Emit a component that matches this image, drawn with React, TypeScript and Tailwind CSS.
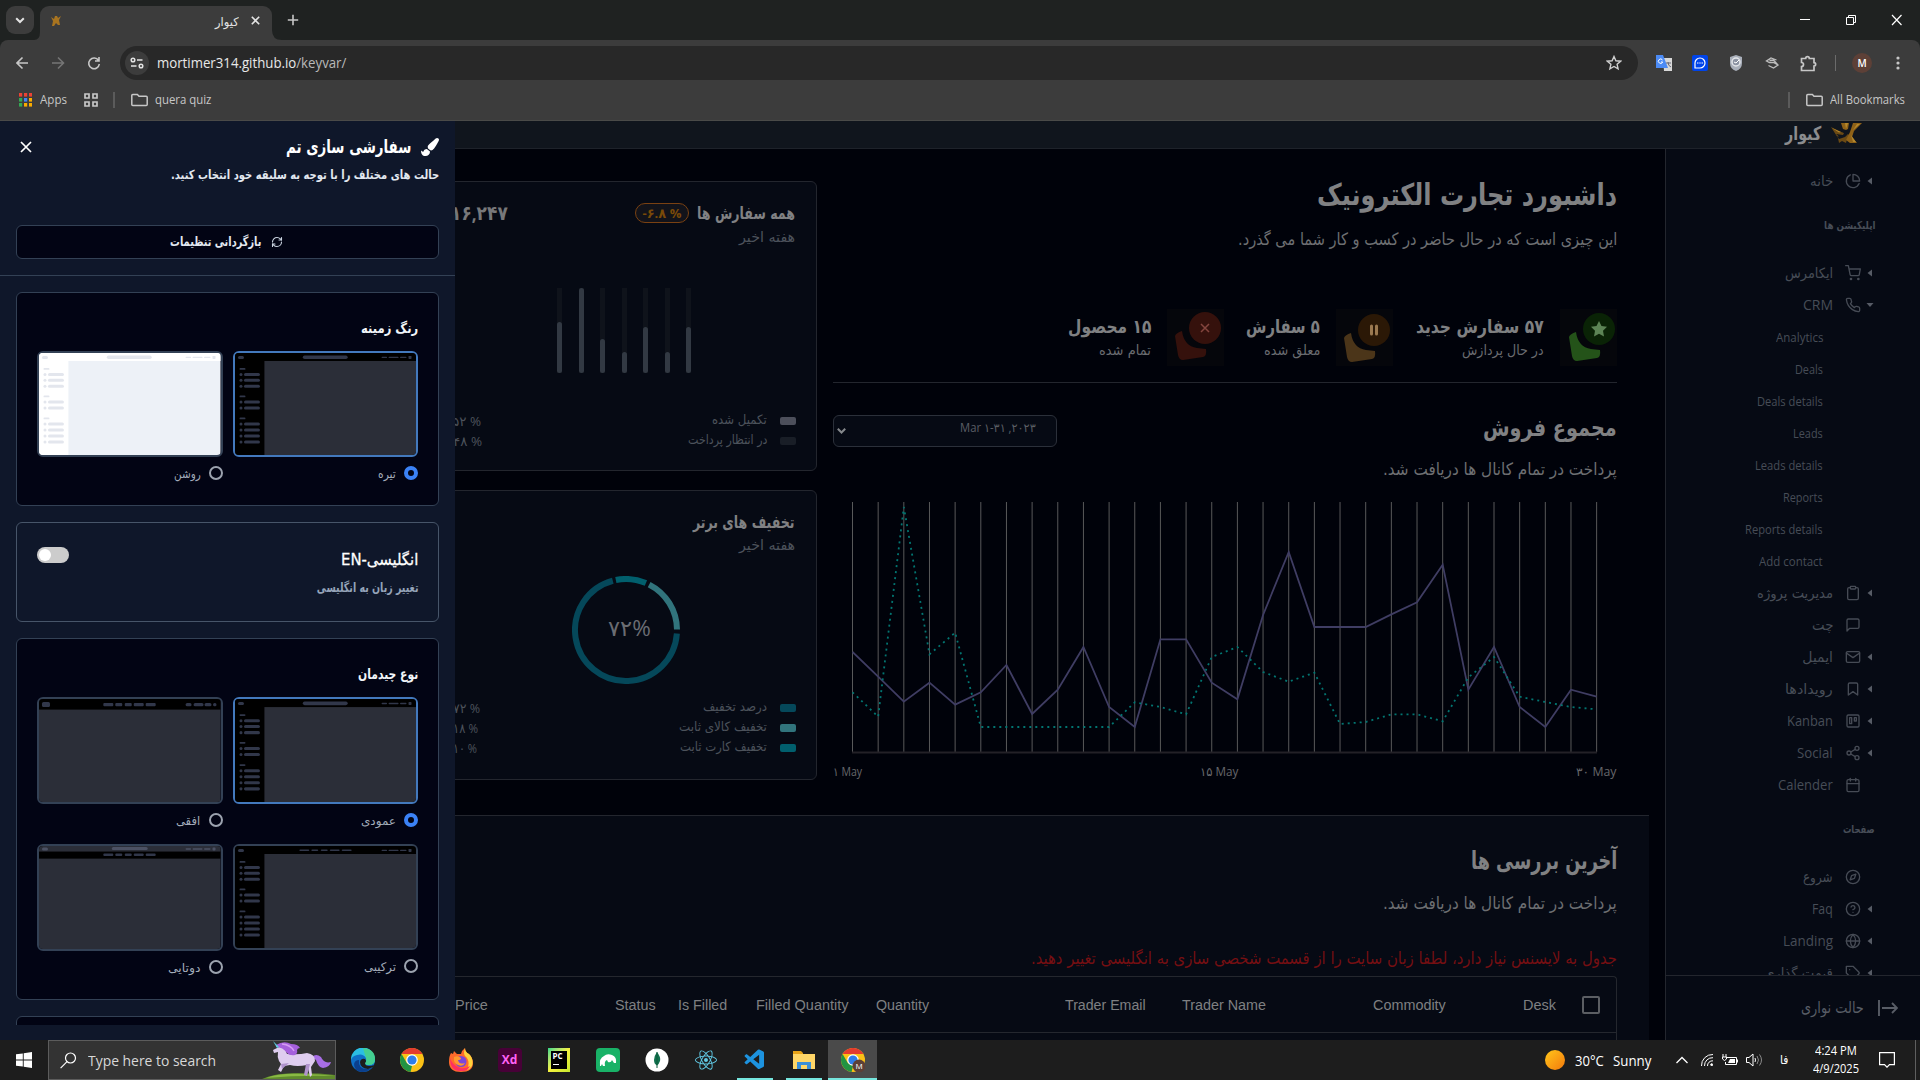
import React, { useLayoutEffect, useRef, useState } from "react";
import {
  FiPieChart, FiShoppingCart, FiPhone, FiClipboard, FiMessageSquare, FiMail, FiBookmark,
  FiTrello, FiShare2, FiCalendar, FiCompass, FiHelpCircle, FiGlobe, FiTag,
} from "react-icons/fi";
import { FaPaintBrush, FaReact } from "react-icons/fa";
import { VscVscode } from "react-icons/vsc";
import { RefreshCw } from "lucide-react";

const FA = "font-['DejaVu_Sans',sans-serif]";
const UI = "font-['Open_Sans','DejaVu_Sans',sans-serif]";

/** Single-line label condensed or stretched to an exact width. */
function T({ w, c = "", rtl = false, children }: { w: number; c?: string; rtl?: boolean; children: React.ReactNode }) {
  const ref = useRef<HTMLSpanElement>(null);
  const [k, setK] = useState(1);
  useLayoutEffect(() => {
    if (ref.current && ref.current.offsetWidth) setK(w / ref.current.offsetWidth);
  }, [w]);
  return (
    <span dir={rtl ? "rtl" : "ltr"} className={`block shrink-0 whitespace-nowrap ${rtl ? FA : UI} ${c}`} style={{ width: w }}>
      <span ref={ref} className={rtl ? "inline-block origin-right" : "inline-block origin-left"} style={{ transform: `scaleX(${k})` }}>
        {children}
      </span>
    </span>
  );
}

/* ---------------------------------------------------------------- browser */

function Folder() {
  return (
    <svg width="18" height="14" viewBox="0 0 18 14" fill="none" stroke="#c7c7c7" strokeWidth="1.5">
      <path d="M1.8 1.5h4.6l1.6 1.8h7.2a1 1 0 0 1 1 1v7.2a1 1 0 0 1-1 1H1.8a1 1 0 0 1-1-1v-9a1 1 0 0 1 1-1z" />
    </svg>
  );
}

function Logo({ className = "" }: { className?: string }) {
  return (
    <svg className={className} viewBox="0 0 31 20">
      <path fill="#6b4a14" d="M0 4l9 4.500 4 1.500-1 2-7-1 3 2.500-2-.3 2 2.800 6-2 3-3 2 2-3 3-1 4-4-2-3 2-1-5z" />
      <path fill="#8f6218" d="M10 0h8l-1 6-2 1-3-1zM22 0h9l-8 8-2 6 5 6h-7l-4-3 4-8z" />
      <path fill="#b5882c" d="M14 0h3l-2 6zM26 1h3l-7 6zM1 5l9 4-2 .5zM20 12l5 7h-3z" />
      <path fill="#10151d" d="M12 9l5-1-2 3z" />
    </svg>
  );
}

function Browser() {
  return (
    <div className="h-[121px] bg-[#1f2221]">
      <div className="flex h-10 items-start pl-1.5">
        <div className="mt-1.5 flex h-7 w-7 items-center justify-center rounded-[9px] bg-[#3c3c3c]">
          <svg width="10" height="7" fill="none" stroke="#e3e3e3" strokeWidth="2"><path d="M1.2 1.2L5 5l3.8-3.8" /></svg>
        </div>
        <svg width="6" height="40" className="shrink-0"><path d="M0 40q6 0 6-8v8z" fill="#3c3c3c" /></svg>
        <div className="mt-1.5 flex h-[34px] w-[232px] items-center rounded-t-[9px] bg-[#3c3c3c] pl-[11px]">
          <svg className="mb-1.5" width="10" height="11"><path fill="#a87420" d="M0 2l3 2 1-3h2l1 2 3-2-2 4 1 5H7L5 8l-2 3H1l1-5z" /></svg>
          <div className="ml-[154px]"><T w={24} rtl c="text-[12px] leading-[20px] text-[#e3e3e3] mb-0.5">کیوار</T></div>
          <svg className="mb-1.5 ml-3" width="9" height="9" stroke="#e3e3e3" strokeWidth="1.6"><path d="M.8.8l7.4 7.4M8.2.8L.8 8.2" /></svg>
        </div>
        <svg width="10" height="40" className="shrink-0"><path d="M10 40q-10 0-10-10v10z" fill="#3c3c3c" /></svg>
        <svg className="ml-[5px] mt-3.5" width="12" height="12" stroke="#c7c7c7" strokeWidth="1.6"><path d="M6 .8v10.4M.8 6h10.4" /></svg>
        <div className="ml-auto mt-[14px] flex pr-[18px]">
          <svg width="102" height="12" fill="none" stroke="#fff" strokeWidth="1">
            <path d="M0 5.5h10" />
            <path d="M46.5 3.5h7v7h-7zM48.5 3.5v-2h7v7h-2" />
            <path d="M92 1l9.5 10M101.500 1l-9.5 10" strokeWidth="1.2" />
          </svg>
        </div>
      </div>
      <div className="h-[81px] rounded-t-lg border-b border-[#4a4a48] bg-[#3c3c3c]">
        <div className="flex h-[46px] items-center">
          <svg className="ml-4 shrink-0" width="86" height="16" fill="none" strokeWidth="1.6">
            <path stroke="#c7c7c7" d="M12 8H1.5M6.5 2.5L1 8l5.500 5.500" />
            <path stroke="#757575" d="M36 8h10.500M42 2.500L47.500 8 42 13.500" />
            <path stroke="#c7c7c7" d="M82.500 5.500A5.300 5.300 0 1 0 83.300 9M83 2v4h-4" />
          </svg>
          <div className="ml-[18px] flex h-[34px] w-[1518px] items-center rounded-full bg-[#282828] pl-[5px] pr-4">
            <div className="flex h-6 w-6 items-center justify-center rounded-full bg-[#3c3c3c]">
              <svg width="14" height="12" fill="none" stroke="#e3e3e3" strokeWidth="1.500"><circle cx="3" cy="3" r="1.800" /><path d="M7 3h5.500M1 9h5.500" /><circle cx="11" cy="9" r="1.800" /></svg>
            </div>
            <T w={189} c="ml-2 text-[14px] leading-[20px] text-[#e8e8e8]">mortimer314.github.io<span className="text-[#b9b9b9]">/keyvar/</span></T>
            <svg className="ml-auto" width="16" height="16" viewBox="0 0 16 16" fill="none" stroke="#d0d0d0" strokeWidth="1.400"><path d="M8 1.500l1.900 4.300 4.700.4-3.500 3.100 1 4.600L8 11.500l-4.100 2.400 1-4.600L1.400 6.200l4.700-.4z" /></svg>
          </div>
          <div className="flex flex-1 items-center">
            <svg className="ml-[18px]" width="16" height="16"><path fill="#d8d8d8" d="M7 3h9v13H8z" /><path fill="#4c8bf5" d="M0 0h7l5 13H0z" /><path d="M6.500 5A2.200 2.200 0 1 0 6.700 7H5" fill="none" stroke="#fff" /><path d="M10 8h5M12 7q0 4 3 5" stroke="#667" fill="none" /></svg>
            <svg className="ml-5" width="16" height="16"><rect width="16" height="16" rx="2" fill="#0044ea" /><path d="M3 13V8a5 5 0 1 1 5 5z" fill="none" stroke="#fff" strokeWidth="1.200" /><path d="M5 8h1.500M7.300 8h1.400M9.500 8H11" stroke="#fff" /></svg>
            <svg className="ml-5" width="16" height="16"><path d="M8 0l6 2v6q0 6-6 8-6-2-6-8V2z" fill="#a9afba" /><circle cx="8" cy="7" r="4" fill="#8c93a3" stroke="#e4e6ea" strokeWidth="1.500" /><path d="M6 7l2 1 3-3" stroke="#fff" fill="none" /></svg>
            <svg className="ml-5" width="16" height="16" fill="none" stroke="#bdbdbd" strokeWidth="1.300"><path d="M12.500 5L7 3 2.500 6l3 1.500h4l4.500 2.500-4.500 3-5-2.500M5.500 5.500l4-.5 4 4.500" /></svg>
            <svg className="ml-5" width="17" height="17" fill="none" stroke="#c7c7c7" strokeWidth="1.700"><path d="M1.500 3.500h4.200a1.800 1.800 0 0 1 3.600 0H14v4.200a1.600 1.600 0 0 1 0 3.300v4.500H1.500V11.500a2 2 0 0 0 0-4z" /></svg>
            <div className="ml-[18px] h-4 w-px bg-[#6b6b6b]" />
            <div className="ml-4 flex h-5 w-5 items-center justify-center rounded-full bg-[#5d4037] font-['Open_Sans',sans-serif] text-[10px] font-semibold text-white">M</div>
            <svg className="ml-6" width="4" height="14" fill="#c7c7c7"><circle cx="2" cy="2" r="1.600" /><circle cx="2" cy="7" r="1.600" /><circle cx="2" cy="12" r="1.600" /></svg>
          </div>
        </div>
        <div className="flex h-7 items-center pl-[19px]">
          <svg width="13" height="14">
            {["#ea4335", "#ea4335", "#ea4335", "#34a853", "#4285f4", "#f9ab00", "#34a853", "#f9ab00", "#f9ab00"].map((f, i) => (
              <rect key={i} x={(i % 3) * 5} y={Math.floor(i / 3) * 5} width="3.200" height="3.600" fill={f} />
            ))}
          </svg>
          <T w={27} c="ml-2 text-[12px] text-[#c7c7c7]">Apps</T>
          <svg className="ml-[17px]" width="14" height="14" fill="none" stroke="#c7c7c7" strokeWidth="1.700"><path d="M1 1h4v4H1zM9 1h4v4H9zM1 9h4v4H1zM9 9h4v4H9z" /></svg>
          <div className="ml-[15px] mr-4 h-4 w-0.5 bg-[#5b5b5b]" />
          <Folder />
          <T w={56} c="ml-1.5 text-[12px] text-[#c7c7c7]">quera quiz</T>
          <div className="ml-auto mr-4 h-4 w-0.5 bg-[#5b5b5b]" />
          <Folder />
          <T w={75} c="ml-1.5 mr-[15px] text-[12px] text-[#c7c7c7]">All Bookmarks</T>
        </div>
      </div>
    </div>
  );
}

/* ----------------------------------------------------------- theme drawer */

type Kind = "light" | "dark" | "horizontal" | "combo" | "dual";

function Thumb({ kind }: { kind: Kind }) {
  const light = kind === "light";
  const bar = light ? "#fff" : "#000";
  const body = light ? "#edf1f7" : "#2b2e38";
  const pill = light ? "#e3e6ed" : "#31374a";
  const side = kind === "light" || kind === "dark" || kind === "combo";
  const topH = side ? 8 : kind === "horizontal" ? 10.5 : 12.5;
  const pills: [number, number][] = [[64.5, 10], [76.5, 7], [86, 7], [95, 10], [107, 10]];
  return (
    <svg className="block h-full w-full" viewBox="0 0 182 102" preserveAspectRatio="none">
      <rect width="182" height="102" fill={body} />
      <rect width="182" height={topH} fill={bar} />
      {kind === "dual" && <rect width="182" height="5.500" fill="#2b2e38" />}
      {side && <rect width="29.500" height="102" fill={bar} />}
      <g fill={kind === "dual" ? "#4c5163" : pill}>
        <rect x="3" y={kind === "dual" ? 1.5 : 3} width={kind === "horizontal" ? 8 : 6} height={kind === "horizontal" ? 5 : 3} rx="1.500" />
        {kind === "horizontal"
          ? [[147, 6], [155, 10], [166, 7], [174.5, 3.5]].map(([x, w]) => <rect key={x} x={x} y="4" width={w} height="3.200" rx="1.600" />)
          : [[147, 5.5], [154, 10], [165.5, 6.5], [174, 3]].map(([x, w]) => (
              <rect key={x} x={x} y={(kind === "dual" ? 2.2 : 3.7) - (w === 3 ? 0.8 : 0)} width={w} height={w === 3 ? 3 : 1.4} rx=".7" />
            ))}
        {(kind === "light" || kind === "dark") && <rect x="68" y="2.500" width="45" height="3.600" rx="1.800" />}
        {kind === "dual" && <rect x="73" y="1" width="36" height="3" rx="1.500" />}
      </g>
      <g fill={pill}>
        {!light && kind !== "dark" && pills.map(([x, w]) => (
          <rect key={x} x={x} y={kind === "horizontal" ? 4 : kind === "dual" ? 7.5 : 3.4} width={w} height={kind === "horizontal" ? 3.2 : kind === "dual" ? 2.5 : 1.6} rx="1" />
        ))}
        {side && [15.5, 43, 65].map((y) => <rect key={y} x="4.500" y={y - 0.5} width="6" height="1.800" rx=".9" />)}
        {side && [21.5, 27.3, 33.3, 49, 55, 71, 77, 83, 89].map((y) => (
          <g key={y}><rect x="4.500" y={y - 1.5} width="3" height="3" rx="1.500" /><rect x="9" y={y - 1.5} width="16" height="3" rx="1.500" /></g>
        ))}
      </g>
    </svg>
  );
}

function Option({ kind, label, w, on = false, h = "h-[106px]" }: { kind: Kind; label: string; w: number; on?: boolean; h?: string }) {
  return (
    <div className="w-[186px]">
      <div className={`overflow-hidden rounded-md border-2 ${h} ${on ? "border-[#4379bd]" : "border-[#334155]"}`}><Thumb kind={kind} /></div>
      <div className="mt-[9px] flex h-3.5 items-center justify-end gap-2">
        <T w={w} rtl c="mt-0.5 text-[12px] font-medium leading-[14px] text-[#a3acba]">{label}</T>
        {on ? <span className="h-3.5 w-3.5 rounded-full border-[4px] border-[#3b82f6]" /> : <span className="h-3.5 w-3.5 rounded-full border-2 border-[#9ca3af]" />}
      </div>
    </div>
  );
}

function Drawer() {
  return (
    <aside className="flex h-full w-[455px] shrink-0 flex-col overflow-hidden bg-[#0f172a]">
      <div className="h-[155px] border-b border-[#334155] px-4 pt-[14px]">
        <div className="flex h-6 items-center pl-1">
          <svg className="mr-auto" width="12" height="12" stroke="#fff" strokeWidth="1.700"><path d="M1 1l10 10M11 1L1 11" /></svg>
          <T w={125} rtl c="text-[18px] font-bold leading-[24px] text-white">سفارشی سازی تم</T>
          <FaPaintBrush className="ml-2.5 h-[18px] w-[18px] text-white" />
        </div>
        <div className="mt-[5px] flex h-6 justify-end"><T w={268} rtl c="text-[12.5px] font-bold leading-[22px] text-[#e2e8f0]">حالت های مختلف را با توجه به سلیقه خود انتخاب کنید.</T></div>
        <div className="mt-[37px] flex h-[34px] items-center justify-center gap-[9px] rounded-md border border-[#334155] bg-[#020414] pr-0.5">
          <T w={91} rtl c="text-[13px] font-bold leading-[32px] text-[#e2e8f0]">بازگردانی تنظیمات</T>
          <RefreshCw className="h-3 w-3 text-[#cbd5e1]" strokeWidth={2.2} />
        </div>
      </div>
      <div className="mx-4 h-[749px] overflow-hidden pt-4">
        <section className="h-[214px] rounded-md border border-[#334155] bg-[#020414] px-5 pt-[25px]">
          <div className="flex justify-end"><T w={57} rtl c="text-[14px] font-bold leading-[20px] text-[#f1f5f9]">رنگ زمینه</T></div>
          <div className="mt-[13px] flex justify-between gap-2.5">
            <Option kind="light" label="روشن" w={27} />
            <Option kind="dark" label="تیره" w={18} on />
          </div>
        </section>
        <section className="mt-4 flex h-[100px] justify-between rounded-md border border-[#475569] px-5 pt-6">
          <span className="flex h-4 w-8 items-center rounded-full bg-[#ccc] pl-0.5"><span className="h-3 w-3 rounded-full bg-white" /></span>
          <div className="flex flex-col items-end">
            <T w={77} rtl c="mt-px text-[16px] leading-[24px] text-white [-webkit-text-stroke:0.3px_white]">انگلیسی-EN</T>
            <T w={102} rtl c="mt-1.5 text-[13px] font-bold leading-[20px] text-[#94a3b8]">تغییر زبان به انگلیسی</T>
          </div>
        </section>
        <section className="mt-4 h-[362px] rounded-md border border-[#334155] bg-[#020414] px-5 pt-[25px]">
          <div className="flex justify-end"><T w={60} rtl c="text-[14px] font-bold leading-[20px] text-[#f1f5f9]">نوع چیدمان</T></div>
          <div className="mt-[13px] flex justify-between gap-2.5">
            <Option kind="horizontal" label="افقی" w={24} h="h-[107px]" />
            <Option kind="dark" label="عمودی" w={35} on h="h-[107px]" />
          </div>
          <div className="mt-[17px] flex justify-between gap-2.5">
            <Option kind="dual" label="دوتایی" w={32} h="h-[107px]" />
            <Option kind="combo" label="ترکیبی" w={32} />
          </div>
        </section>
        <section className="mt-4 h-12 rounded-md border border-[#334155] bg-[#020414]" />
      </div>
    </aside>
  );
}

/* -------------------------------------------------------------- dashboard */

function Legend({ color, label, w, value, vr, vw }: { color: string; label: string; w: number; value: string; vr: string; vw: number }) {
  return (
    <div className="flex h-5 items-center pr-5">
      <div className={`${vr} flex shrink-0 justify-end`}><T w={vw} rtl={false} c="text-[13px] leading-[18px] text-[#4c525b]">{value}</T></div>
      <div className="ml-auto"><T w={w} rtl c="-mt-0.5 text-[13px] leading-[18px] text-[#4c525b]">{label}</T></div>
      <span className={`ml-[13px] h-2 w-4 rounded-[2px] ${color}`} />
    </div>
  );
}

function OrdersCard() {
  const heights = [51, 85, 34, 21.5, 46.5, 21.5, 46.5];
  return (
    <div className="h-[290px] rounded-md border border-[#23262e] bg-[#060a14]">
      <div className="mt-4 flex h-[30px] items-center pr-[21px]">
        <div className="flex w-[72px] justify-end"><T w={57} c="text-[20px] font-bold leading-[30px] text-[#77787a]">۱۶,۲۴۷</T></div>
        <div className="ml-auto flex h-5 w-[54px] items-center justify-center rounded-full border border-[#7a4112] bg-[#12131a]">
          <T w={39} c="text-[13px] font-bold leading-[18px] text-[#7a4a08]">-۶.۸ %</T>
        </div>
        <div className="ml-2"><T w={98} rtl c="text-[17px] font-bold leading-[26px] text-[#808183]">همه سفارش ها</T></div>
      </div>
      <div className="-mt-px flex justify-end pr-[21px]"><T w={56} rtl c="text-[14px] leading-[20px] text-[#4c525b]">هفته اخیر</T></div>
      <div className="ml-[121px] mt-[41px] flex h-[85px] w-[134px] items-stretch justify-between">
        {heights.map((h, i) => (
          <div key={i} className="flex w-[5px] flex-col justify-end bg-[#0f131b]"><div className="rounded-full bg-[#323943]" style={{ height: h }} /></div>
        ))}
      </div>
      <div className="mt-[38px]">
        <Legend color="bg-[#4c4f5b]" label="تکمیل شده" w={55} value="۵۲ %" vr="w-[45px]" vw={29} />
        <Legend color="bg-[#191e27]" label="در انتظار پرداخت" w={79} value="۴۸ %" vr="w-[46px]" vw={29} />
      </div>
    </div>
  );
}

function arc(a0: number, a1: number) {
  const p = (a: number) => `${54 + 51 * Math.cos((a * Math.PI) / 180)} ${54 + 51 * Math.sin((a * Math.PI) / 180)}`;
  return `M${p(a0)}A51 51 0 ${a1 - a0 > 180 ? 1 : 0} 1 ${p(a1)}`;
}

function DiscountCard() {
  return (
    <div className="mt-[19px] h-[290px] rounded-md border border-[#23262e] bg-[#060a14] pt-[18px]">
      <div className="flex justify-end pr-[21px]"><T w={102} rtl c="text-[17px] font-bold leading-[26px] text-[#808183]">تخفیف های برتر</T></div>
      <div className="flex justify-end pr-[21px]"><T w={56} rtl c="text-[14px] leading-[20px] text-[#4c525b]">هفته اخیر</T></div>
      <div className="ml-[136px] mt-[21px] grid h-[108px] w-[108px] place-items-center">
        <svg className="col-start-1 row-start-1" width="108" height="108" fill="none" strokeWidth="6">
          <path stroke="#05485a" d={arc(4, 255)} />
          <path stroke="#015f6d" d={arc(258.5, 293)} />
          <path stroke="#31747c" d={arc(297, 359.5)} />
        </svg>
        <div className="col-start-1 row-start-1 -mt-1.5 ml-1.5"><T w={43} c="text-[22px] leading-[30px] text-[#6a6c72]">۷۲%</T></div>
      </div>
      <div className="mt-[14px]">
        <Legend color="bg-[#05485a]" label="درصد تخفیف" w={64} value="۷۲ %" vr="w-[44px]" vw={27} />
        <Legend color="bg-[#31747c]" label="تخفیف کالای ثابت" w={88} value="۱۸ %" vr="w-[42px]" vw={25} />
        <Legend color="bg-[#015f6d]" label="تخفیف کارت ثابت" w={87} value="۱۰ %" vr="w-[41px]" vw={24} />
      </div>
    </div>
  );
}

function Stat({ kind, title, tw, sub, sw, m }: { kind: "g" | "o" | "r"; title: string; tw: number; sub: string; sw: number; m: string }) {
  const [disc, leaf, ink] = kind === "g" ? ["#0a2306", "#245319", "#5c8455"] : kind === "o" ? ["#2b1806", "#4b3519", "#9b7950"] : ["#35110c", "#35110c", "#84453e"];
  return (
    <div className={`flex items-center ${m}`}>
      <div className="-mt-0.5 mr-4 flex flex-col items-end">
        <T w={tw} rtl c="text-[19px] font-bold leading-[26px] text-[#7f8082]">{title}</T>
        <T w={sw} rtl c="text-[14px] leading-[22px] text-[#6a6c70]">{sub}</T>
      </div>
      <svg width="57" height="57" className="shrink-0">
        <rect width="57" height="57" fill="#05060b" />
        <g transform={kind === "g" ? "translate(0 1)" : kind === "o" ? "translate(-1 2)" : "translate(-1 0)"}>
          <path fill={leaf} d="M9 27q1-3 7-5 2 15 15 17l9 1q1 7-3 8l-20 3q-4 0-5-5z" />
          <circle cx="39" cy="19" r="16" fill={disc} />
          {kind === "g" && <path fill={ink} d="M39 11l2.500 5 5.500.8-4 4 1 5.700-5-2.700-5 2.700 1-5.700-4-4 5.500-.8z" />}
          {kind === "o" && <path stroke={ink} strokeWidth="3" strokeLinecap="round" d="M36.500 15v8M41.500 15v8" />}
          {kind === "r" && <path stroke={ink} strokeWidth="1.500" d="M35 15l8 8M43 15l-8 8" />}
        </g>
      </svg>
    </div>
  );
}

const SALES = [519, 593, 668, 611, 677, 640, 558, 705, 632, 504, 684, 744, 481, 481, 611, 661, 408, 219, 444, 444, 444, 406, 370, 257, 632, 504, 684, 744, 632, 653];
const PREV = [640, 713, 84, 526, 461, 744, 744, 744, 744, 744, 744, 670, 684, 706, 534, 504, 579, 608, 581, 735, 729, 706, 706, 727, 595, 534, 653, 669, 684, 691];
const gx = (i: number) => 0.5 + i * 25.66;
const toPoints = (d: number[]) => d.map((v, i) => `${gx(i)},${(v - 69) / 3}`).join(" ");

function Chart() {
  return (
    <svg className="ml-[19px] block" width="746" height="252" fill="none">
      {SALES.map((_, i) => <path key={i} d={`M${gx(i)} 0v250`} stroke="#58595a" strokeWidth="1" />)}
      <path d="M0 250.500h745" stroke="#232127" strokeWidth="2" />
      <polyline points={toPoints(SALES)} stroke="#3f3d63" strokeWidth="1.800" />
      <polyline points={toPoints(PREV)} stroke="#027571" strokeWidth="1.800" strokeDasharray="2 4" />
    </svg>
  );
}

function TableHead() {
  const cols: [string, number, string][] = [
    ["Price", 33, ""], ["Status", 41, "ml-[127px]"], ["Is Filled", 49, "ml-[22px]"], ["Filled Quantity", 92, "ml-[29px]"],
    ["Quantity", 53, "ml-[28px]"], ["Trader Email", 81, "ml-[136px]"], ["Trader Name", 84, "ml-[36px]"], ["Commodity", 73, "ml-[107px]"], ["Desk", 33, "ml-[77px]"],
  ];
  return (
    <div className="mr-8 mt-[4px] h-[64px] overflow-hidden rounded-tr border-r border-t border-[#24272e]">
      <div className="flex h-14 items-center border-b border-[#24272e]">
        {cols.map(([t, w, m]) => (
          <div key={t} className={m}><T w={w} c="text-[14px] text-[#7f8082] [&>span]:font-['Liberation_Sans',sans-serif]">{t}</T></div>
        ))}
        <span className="ml-[26px] h-[18px] w-[18px] rounded-[2px] border-2 border-[#5b5e63]" />
      </div>
    </div>
  );
}

function Dashboard() {
  return (
    <main className="flex h-full w-[1210px] shrink-0 flex-col overflow-hidden bg-[#00020a]">
      <div className="flex h-[666px] shrink-0">
        <div className="-ml-5 w-[382px] shrink-0 pt-8"><OrdersCard /><DiscountCard /></div>
        <div className="ml-4 w-[784px] shrink-0">
          <div className="flex h-[71px] items-end justify-end"><T w={300} rtl c="text-[30px] font-bold leading-[50px] text-[#808183]">داشبورد تجارت الکترونیک</T></div>
          <div className="mt-[5px] flex justify-end"><T w={379} rtl c="text-[17px] leading-[28px] text-[#6d6f72]">این چیزی است که در حال حاضر در کسب و کار شما می گذرد.</T></div>
          <div className="mt-[56px] flex h-[74px] items-start justify-end border-b border-[#23262e]">
            <Stat kind="r" title="۱۵ محصول" tw={83} sub="تمام شده" sw={52} m="mr-[22px]" />
            <Stat kind="o" title="۵ سفارش" tw={74} sub="معلق شده" sw={56} m="mr-[23px]" />
            <Stat kind="g" title="۵۷ سفارش جدید" tw={128} sub="در حال پردازش" sw={82} m="" />
          </div>
          <div className="mt-[26px] flex items-start justify-between">
            <div className="mt-[6px] flex h-8 w-[224px] items-center rounded-md border border-[#2b303a] bg-[#060a14] pl-[3px] pr-5">
              <svg width="9" height="6" fill="none" stroke="#85888c" strokeWidth="2"><path d="M.8.8l3.700 3.700L8.200.8" /></svg>
              <div className="mb-1.5 ml-auto"><T w={76} c="text-[12px] leading-[18px] text-[#5b5e64]">Mar ۱-۳۱ ,۲۰۲۳</T></div>
            </div>
            <T w={134} rtl c="text-[24px] font-bold leading-[38px] text-[#808183]">مجموع فروش</T>
          </div>
          <div className="mt-2 flex justify-end"><T w={234} rtl c="text-[17px] leading-[28px] text-[#6d6f72]">پرداخت در تمام کانال ها دریافت شد.</T></div>
          <div className="mt-[19px]"><Chart /></div>
          <div className="mt-[9px] flex">
            <T w={29} c="text-[12px] leading-[18px] text-[#66676a]">۱ May</T>
            <div className="ml-[338px]"><T w={38} c="text-[12px] leading-[18px] text-[#66676a]">۱۵ May</T></div>
            <div className="ml-auto mr-px"><T w={40} c="text-[12px] leading-[18px] text-[#66676a]">۳۰ May</T></div>
          </div>
        </div>
      </div>
      <div className="mr-4 flex-1 border-t border-[#23262e] bg-[#060a14]">
        <div className="mr-8 mt-[25px] flex justify-end"><T w={146} rtl c="text-[25px] font-bold leading-[40px] text-[#808183]">آخرین بررسی ها</T></div>
        <div className="mr-8 mt-2 flex justify-end"><T w={234} rtl c="text-[17px] leading-[28px] text-[#6d6f72]">پرداخت در تمام کانال ها دریافت شد.</T></div>
        <div className="mr-8 mt-[27px] flex justify-end"><T w={586} rtl c="text-[17px] leading-[28px] text-[#750f12]">جدول به لایسنس نیاز دارد، لطفا زبان سایت را از قسمت شخصی سازی به انگلیسی تغییر دهید.</T></div>
        <TableHead />
      </div>
    </main>
  );
}

/* ---------------------------------------------------------------- sidebar */

type NavIcon = React.ComponentType<{ className?: string; strokeWidth?: number }>;

function Nav({ Icon, label, w, rtl = false, mark = "left" }: { Icon: NavIcon; label: string; w: number; rtl?: boolean; mark?: "left" | "down" | "none" }) {
  return (
    <div className="flex h-8 shrink-0 items-center justify-end pr-[46px]">
      <T w={w} rtl={rtl} c="text-[14px] leading-[22px] text-[#474d57]">{label}</T>
      <Icon className="ml-3 h-4 w-4 text-[#464b55]" strokeWidth={2} />
      <svg className="ml-[5px]" width="8" height="8" fill="#565b65">
        {mark === "left" && <path d="M6 .5v7L1.500 4z" />}
        {mark === "down" && <path d="M.5 2h7L4 6z" />}
      </svg>
    </div>
  );
}

const SUB: [string, number][] = [["Analytics", 47], ["Deals", 28], ["Deals details", 66], ["Leads", 30], ["Leads details", 68], ["Reports", 40], ["Reports details", 78], ["Add contact", 64]];

function Sidebar() {
  return (
    <nav className="flex h-full w-[255px] shrink-0 flex-col border-l border-[#23262e] bg-[#060a14]">
      <div className="flex h-[826px] flex-col overflow-hidden pt-4">
        <Nav Icon={FiPieChart} label="خانه" w={23} rtl />
        <div className="mt-[18px] flex h-[22px] shrink-0 justify-end pr-[45px]"><T w={51} rtl c="text-[11px] font-bold leading-[22px] text-[#474d57]">اپلیکیشن ها</T></div>
        <div className="h-5 shrink-0" />
        <Nav Icon={FiShoppingCart} label="ایکامرس" w={48} rtl />
        <Nav Icon={FiPhone} label="CRM" w={30} mark="down" />
        {SUB.map(([l, w]) => (
          <div key={l} className="flex h-8 shrink-0 items-center justify-end pr-[97px] pt-0.5"><T w={w} c="text-[12px] text-[#474d57]">{l}</T></div>
        ))}
        <Nav Icon={FiClipboard} label="مدیریت پروژه" w={76} rtl />
        <Nav Icon={FiMessageSquare} label="چت" w={21} rtl mark="none" />
        <Nav Icon={FiMail} label="ایمیل" w={31} rtl />
        <Nav Icon={FiBookmark} label="رویدادها" w={48} rtl />
        <Nav Icon={FiTrello} label="Kanban" w={46} />
        <Nav Icon={FiShare2} label="Social" w={36} />
        <Nav Icon={FiCalendar} label="Calender" w={55} mark="none" />
        <div className="mt-[18px] flex h-[22px] shrink-0 justify-end pr-[45px]"><T w={32} rtl c="text-[11px] font-bold leading-[22px] text-[#474d57]">صفحات</T></div>
        <div className="h-[20px] shrink-0" />
        <Nav Icon={FiCompass} label="شروع" w={30} rtl mark="none" />
        <Nav Icon={FiHelpCircle} label="Faq" w={21} />
        <Nav Icon={FiGlobe} label="Landing" w={50} />
        <Nav Icon={FiTag} label="قیمت گذاری" w={69} rtl />
      </div>
      <div className="flex flex-1 items-center justify-end border-t border-[#23262e] pr-[22px]">
        <T w={63} rtl c="text-[16px] leading-[24px] font-medium text-[#585d66]">حالت نواری</T>
        <svg className="ml-3.5" width="20" height="16" fill="none" stroke="#585d66" strokeWidth="1.900"><path d="M1 0v16M4 8h15M14 3l5 5-5 5" /></svg>
      </div>
    </nav>
  );
}

/* ---------------------------------------------------------------- taskbar */

function ChromeMark({ badge = false }: { badge?: boolean }) {
  return (
    <svg width="24" height="24" viewBox="0 0 24 24">
      <circle cx="12" cy="12" r="12" fill="#fbc116" />
      <path d="M1.600 6A12 12 0 0 1 22.400 6H12z" fill="#e33b2e" />
      <path d="M1.600 6l5.200 9L12 18l-1.500 5.900A12 12 0 0 1 1.600 6z" fill="#229342" />
      <circle cx="12" cy="12" r="5.800" fill="#fff" />
      <circle cx="12" cy="12" r="4.600" fill="#2f7de9" />
      {badge && <circle cx="18" cy="18" r="6.500" fill="#5d4037" />}
      {badge && <text x="18" y="21" fontSize="8" textAnchor="middle" fill="#fff" fontFamily="Open Sans">M</text>}
    </svg>
  );
}

function Unicorn() {
  return (
    <svg className="ml-auto h-[38px] w-[73px] shrink-0" viewBox="0 0 73 38">
      <path d="M0 38q12-6 36-6 24 0 37 2v4z" fill="#5f8a2c" />
      <path d="M4 37q14-5 34-4 20 0 35 2-36-1-69 2z" fill="#8ab944" />
      <path d="M50 16q4-4 9 0 3 7 10 5-1 5-8 6-5-1-7-8z" fill="#a86ee6" />
      <path d="M17 6q6 0 8 7 12 1 20-1 8 1 8 8l-4 6 1 8-2 2-2-9-1-3q-10 2-17 0l-6 1-3 6-3-2 3-6-2-3q-2-4-1-9l-4 1-1-3z" fill="#dfcdef" />
      <path d="M44 23l-2 11 3 1 3-12zM27 22l-8 1 1 5" fill="#b092cc" />
      <path d="M14 4q8-5 15-1 7 0 9 4-3 0-3 3 1 2-2 4-5 1-8-2-4-6-11-6z" fill="#a560dc" />
      <path d="M20 3q9 1 12 7" stroke="#d59bf5" strokeWidth="1.500" fill="none" />
      <path d="M11 0l6 6-2 1z" fill="#5fd0df" />
    </svg>
  );
}

function App24({ children, active = "" }: { children: React.ReactNode; active?: string }) {
  return <div className={`flex h-full w-[49px] shrink-0 flex-col items-center pt-2 ${active}`}>{children}</div>;
}

function Taskbar() {
  return (
    <div className="flex h-10 bg-[#1d1d1d]">
      <div className="flex w-12 items-center justify-center">
        <svg width="16" height="16" fill="#fff"><path d="M0 2.300L6.800 1.400v6.100H0zM7.700 1.300L16 0v7.500H7.700zM0 8.400h6.800v6.200L0 13.700zM7.700 8.400H16V16l-8.300-1.200z" /></svg>
      </div>
      <div className="flex w-[288px] items-center border border-[#5c5c5c] bg-[#333] pl-[11px]">
        <svg width="17" height="17" fill="none" stroke="#fff" strokeWidth="1.200"><circle cx="10.500" cy="6" r="5" /><path d="M7 9.700L.6 16.200" /></svg>
        <T w={128} c="ml-[11px] text-[15px] leading-[20px] text-[#d8d8d8]">Type here to search</T>
        <Unicorn />
      </div>
      <div className="ml-[2px] flex">
        <App24>
          <svg width="24" height="24" viewBox="0 0 24 24">
            <circle cx="12" cy="12" r="12" fill="#0f6fc6" />
            <path d="M0 12A12 12 0 0 1 24 11q0 6-6 6-4 0-4-2 2-2 1-5-3-5-9-3Q1 8 0 12z" fill="#2bbfe3" />
            <path d="M12 0q12 1 12 11 0 6-6 6-4 0-4-2 2-2 1-5-2-6-3-10z" fill="#4bd37c" opacity=".8" />
            <path d="M8 12q-1 9 8 9 4 0 6-3-4 6-11 6-8-1-8-8 1-4 5-4z" fill="#0b3f8c" />
            <path d="M14 15q0 3 4 3 3 0 5-1l-1 2-5 2q-8-1-8-7 1-4 5-3 2 2 0 4z" fill="#1d1d1d" />
          </svg>
        </App24>
        <App24><ChromeMark /></App24>
        <App24>
          <svg width="24" height="24" viewBox="0 0 24 24">
            <path d="M2 5l2 1 1-3 3 3h4q1-4 4-6 0 4 4 6 4 4 4 9 0 9-12 9T0 14q0-6 2-9z" fill="#ff6a2b" />
            <path d="M16 0q0 4 4 6 5 5 3 12-2 3-5 4 4-9-2-14-2-3 0-8z" fill="#ffd23d" />
            <path d="M1 10q0 14 12 13 6 0 8-5-4 3-10 2-8-3-10-10z" fill="#ff2f62" />
            <circle cx="12" cy="13.500" r="5.500" fill="#7a46dd" />
            <path d="M5 9q4-2 7 1 0 2-3 2 1 5 7 3-2 4-7 2-5-2-4-8z" fill="#ff9a2e" />
          </svg>
        </App24>
        <App24><div className="flex h-6 w-6 items-center justify-center rounded bg-[#470137] font-['Open_Sans',sans-serif] text-[12px] font-bold text-[#ff61f6]">Xd</div></App24>
        <App24>
          <div className="h-6 w-[22px] bg-linear-to-br from-[#21d789] via-[#f5f13d] to-[#c6e82e] p-[3px]">
            <div className="h-[18px] w-4 bg-black pl-0.5 font-['Open_Sans',sans-serif] text-[8px] font-bold leading-[10px] text-white">PC<div className="mt-[3px] h-px w-1.5 bg-white" /></div>
          </div>
        </App24>
        <App24>
          <svg width="24" height="24"><rect width="24" height="24" rx="4" fill="#19b267" /><path d="M4 18Q3 10 8 8q3-3 8-1 5 2 4 8h-2l-2-3q-1 3-4 2l-1-2q-3 1-2 6H7l-1-2-1 2z" fill="#fff" /></svg>
        </App24>
        <App24>
          <svg width="24" height="24"><circle cx="12" cy="12" r="11.500" fill="#fff" /><path d="M12 4q4 5 3 9-1 3-3 4.500Q9 16 9 12q0-4 3-8z" fill="#12724f" /><path d="M12 4v16" stroke="#0b5a3a" /></svg>
        </App24>
        <App24><FaReact className="h-[22px] w-[22px] translate-y-px text-[#61c9e4]" /></App24>
        <App24><VscVscode className="h-6 w-6 text-[#1d93df]" /><div className="mt-1.5 h-0.5 w-9 bg-[#76e6de]" /></App24>
        <App24>
          <svg width="24" height="24"><path d="M1 3h8l2 2v3H1z" fill="#e8a317" /><path d="M1 6h22v15H1z" fill="#ffd667" /><path d="M5 21v-7h14v7h-4v-4H9v4z" fill="#3a8fd9" /></svg>
          <div className="mt-1.5 h-0.5 w-9 bg-[#76e6de]" />
        </App24>
        <App24 active="bg-[#4a4a4a]"><ChromeMark badge /><div className="mt-1.5 h-0.5 w-full bg-[#76e6de]" /></App24>
      </div>
      <div className="ml-auto flex items-center">
        <span className="h-5 w-5 rounded-full bg-linear-to-br from-[#ffc61a] to-[#f2780c]" />
        <T w={29} c="ml-2.5 text-[14px] text-white">30°C</T>
        <T w={38} c="ml-[9px] text-[14px] text-white">Sunny</T>
        <svg className="ml-[25px]" width="12" height="8" fill="none" stroke="#fff" strokeWidth="1.300"><path d="M.5 7L6 1.500 11.500 7" /></svg>
        <svg className="ml-[13px]" width="12" height="12" fill="none" stroke="#fff" strokeWidth="1"><path d="M.5 12A11 11 0 0 1 12 .5M3.500 12A8 8 0 0 1 12 3.700M6.500 12A5 5 0 0 1 12 6.800" /><circle cx="10.700" cy="10.700" r="1" fill="#fff" /></svg>
        <svg className="ml-[9px]" width="16" height="12" fill="none" stroke="#fff"><path d="M5 3.500h9.500v7H3.500V8M15.500 5.500v3M1 0v3M4 0v3M.5 3h4v2l-2 1.500L.5 5z" /><path d="M8 5h5v4H6z" fill="#fff" stroke="none" /></svg>
        <svg className="ml-2" width="17" height="14" fill="none" stroke="#fff"><path d="M.5 4.500h2.500L7 1v12L3 9.500H.5zM9 5q1 2 0 4" /><path d="M11 3q3 4 0 8M13.500 1.500q4 5.500 0 11" stroke="#8a8a8a" /></svg>
        <div className="ml-[17px]"><T w={8} rtl c="text-[12px] text-white">فا</T></div>
        <div className="ml-[25px] flex w-[46px] flex-col items-center">
          <T w={42} c="text-[12px] leading-[18px] text-white">4:24 PM</T>
          <T w={46} c="text-[12px] leading-[18px] text-white">4/9/2025</T>
        </div>
        <svg className="ml-[20px]" width="16" height="16" fill="none" stroke="#fff" strokeWidth="1.200"><path d="M.6.600h14.800v12H10.500L8 15.200 5.500 12.600H.6z" /></svg>
        <div className="ml-5 mr-1 h-10 w-px bg-[#5f5f5f]" />
      </div>
    </div>
  );
}

export default function App() {
  return (
    <div className="flex h-[1080px] w-[1920px] flex-col overflow-hidden bg-black">
      <Browser />
      <div className="flex h-[919px]">
        <Drawer />
        <div className="flex w-[1465px] flex-col overflow-hidden">
          <header className="flex h-7 shrink-0 items-center justify-end border-b border-[#1e222a] bg-[#10151d] pr-[58px]">
            <T w={36} rtl c="-mt-1 text-[19px] font-bold leading-[24px] text-[#8b8c8e]">کیوار</T>
            <Logo className="-mt-1 ml-2.5 h-5 w-[31px]" />
          </header>
          <div className="flex h-[891px]"><Dashboard /><Sidebar /></div>
        </div>
      </div>
      <Taskbar />
    </div>
  );
}
